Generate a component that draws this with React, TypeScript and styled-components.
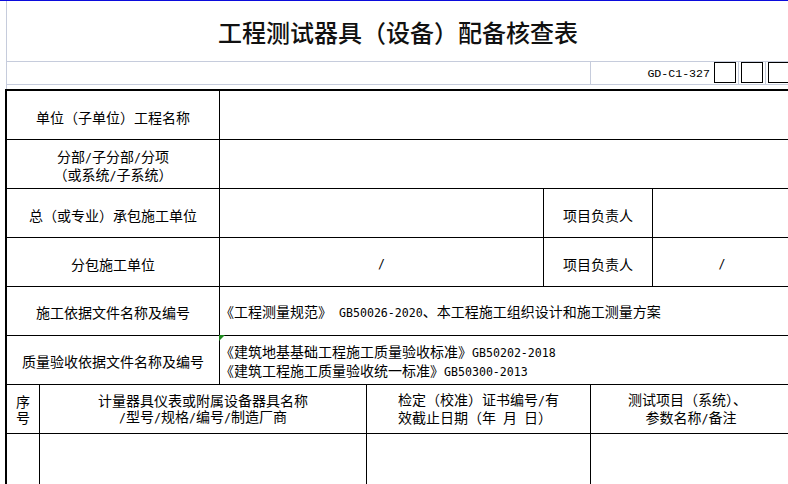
import React from 'react';
import styled, { createGlobalStyle } from 'styled-components';

const GRID = '#c6ccdc';
const CJK = '"Noto Sans CJK SC", "Noto Sans", sans-serif';

const GlobalStyle = createGlobalStyle`
  html, body { margin: 0; padding: 0; background: #ffffff; }
  body { font-family: ${CJK}; color: #000; overflow: hidden; }
`;

const Sheet = styled.div`
  width: 788px;
  height: 484px;
  overflow: hidden;
  box-sizing: border-box;
  border-top: 1px solid #0b0bdc;
  background: #fff;
`;

const Top = styled.div`
  margin-left: 6px;
  width: 782px;
  border-left: 1px solid ${GRID};
`;

const TitleRow = styled.div`
  height: 61px;
  box-sizing: border-box;
  border-bottom: 1px solid ${GRID};
  display: flex;
  align-items: center;
  justify-content: center;
  padding-top: 2px;
`;

const Title = styled.h1`
  margin: 0;
  font-family: ${CJK};
  font-size: 24px;
  font-weight: 500;
  line-height: 28px;
  color: #111;
  white-space: nowrap;
`;

const CodeRow = styled.div`
  display: flex;
  height: 23px;
  box-sizing: border-box;
  border-bottom: 1px solid ${GRID};
`;

const CodeBlank = styled.div`
  flex: 0 0 584px;
  box-sizing: border-box;
  border-right: 1px solid ${GRID};
`;

const CodeCell = styled.div<{ $w: number; $grow?: boolean }>`
  flex: ${(p) => (p.$grow ? '1 1 auto' : `0 0 ${p.$w}px`)};
  box-sizing: border-box;
  border-right: ${(p) => (p.$grow ? 'none' : `1px solid ${GRID}`)};
  display: flex;
  align-items: flex-start;
  justify-content: ${(p) => (p.$grow ? 'flex-start' : 'flex-end')};
  padding-left: ${(p) => (p.$grow ? 2 : 0)}px;
`;

const CodeText = styled.span`
  font-family: "Liberation Mono", monospace;
  font-size: 11.6px;
  line-height: 22px;
  padding-top: 1px;
  white-space: nowrap;
`;

const Box = styled.span<{ $after?: number }>`
  display: block;
  width: 22px;
  height: 21px;
  box-sizing: border-box;
  border: 1px solid #000;
  margin-left: 4px;
  margin-right: ${(p) => p.$after ?? 0}px;
  flex: 0 0 auto;
`;

const BoxOnly = styled(Box)`
  margin-left: 0;
`;

const Gap = styled.div`
  height: 4px;
`;

const Table = styled.div`
  margin-left: 5px;
  width: 785px;
  border-top: 2px solid #000;
  border-left: 2px solid #000;
`;

const Row = styled.div<{ $cols: string; $h?: number }>`
  display: grid;
  grid-template-columns: ${(p) => p.$cols};
  height: ${(p) => p.$h ?? 49}px;
  box-sizing: border-box;
  border-bottom: 1px solid #000;
`;

const Cell = styled.div<{ $left?: boolean; $shift?: number }>`
  position: relative;
  box-sizing: border-box;
  border-right: 1px solid #000;
  display: flex;
  flex-direction: column;
  justify-content: center;
  align-items: ${(p) => (p.$left ? 'flex-start' : 'center')};
  text-align: ${(p) => (p.$left ? 'left' : 'center')};
  padding-left: ${(p) => (p.$left ? 0 : 0)}px;
  padding-top: ${(p) => p.$shift ?? 0}px;
  font-size: 14px;
  line-height: 16.4px;
  white-space: nowrap;
  min-width: 0;
`;

const Line = styled.span`
  display: block;
  white-space: pre;
`;

const Lat = styled.span`
  font-family: "DejaVu Sans Mono", monospace;
  font-size: 11.6px;
  white-space: pre;
`;

const Flag = styled.span`
  position: absolute;
  left: -1px;
  top: -1px;
  width: 0;
  height: 0;
  border-top: 6px solid #1f8a1f;
  border-right: 6px solid transparent;
`;

const C2 = '213px 1fr';
const C4 = '213px 324px 109px 1fr';
const C7 = '33px 327px 224px 1fr';

export default function App() {
  return (
    <>
      <GlobalStyle />
      <Sheet>
        <Top>
          <TitleRow>
            <Title>工程测试器具（设备）配备核查表</Title>
          </TitleRow>
          <CodeRow>
            <CodeBlank />
            <CodeCell $w={148}>
              <CodeText>GD-C1-327</CodeText>
              <Box $after={2} />
            </CodeCell>
            <CodeCell $w={27}>
              <BoxOnly $after={2} />
            </CodeCell>
            <CodeCell $w={0} $grow>
              <BoxOnly />
            </CodeCell>
          </CodeRow>
          <Gap />
        </Top>
        <Table>
          <Row $cols={C2}>
            <Cell $shift={4}>单位（子单位）工程名称</Cell>
            <Cell />
          </Row>
          <Row $cols={C2}>
            <Cell $shift={4}>
              <Line>分部<Lat>/</Lat>子分部<Lat>/</Lat>分项</Line>
              <Line>（或系统<Lat>/</Lat>子系统）</Line>
            </Cell>
            <Cell />
          </Row>
          <Row $cols={C4}>
            <Cell $shift={4}>总（或专业）承包施工单位</Cell>
            <Cell />
            <Cell $shift={5}>项目负责人</Cell>
            <Cell />
          </Row>
          <Row $cols={C4}>
            <Cell $shift={4}>分包施工单位</Cell>
            <Cell $shift={4}><Lat>/</Lat></Cell>
            <Cell $shift={5}>项目负责人</Cell>
            <Cell $shift={4}><Lat>/</Lat></Cell>
          </Row>
          <Row $cols={C2}>
            <Cell $shift={3}>施工依据文件名称及编号</Cell>
            <Cell $left $shift={3}>
              <Line>
                《工程测量规范》<Lat> GB50026-2020</Lat>、本工程施工组织设计和施工测量方案
              </Line>
            </Cell>
          </Row>
          <Row $cols={C2}>
            <Cell $shift={3}>质量验收依据文件名称及编号</Cell>
            <Cell $left $shift={3}>
              <Flag />
              <Line>《建筑地基基础工程施工质量验收标准》<Lat>GB50202-2018</Lat></Line>
              <Line>《建筑工程施工质量验收统一标准》<Lat>GB50300-2013</Lat></Line>
            </Cell>
          </Row>
          <Row $cols={C7}>
            <Cell>
              <Line>序</Line>
              <Line>号</Line>
            </Cell>
            <Cell>
              <Line>计量器具仪表或附属设备器具名称</Line>
              <Line><Lat>/</Lat>型号<Lat>/</Lat>规格<Lat>/</Lat>编号<Lat>/</Lat>制造厂商</Line>
            </Cell>
            <Cell>
              <Line>检定（校准）证书编号<Lat>/</Lat>有</Line>
              <Line>效截止日期（年<Lat> </Lat>月<Lat> </Lat>日）<Lat> </Lat></Line>
            </Cell>
            <Cell>
              <Line>测试项目（系统）、<Lat> </Lat></Line>
              <Line>参数名称<Lat>/</Lat>备注</Line>
            </Cell>
          </Row>
          <Row $cols={C7} $h={70}>
            <Cell />
            <Cell />
            <Cell />
            <Cell />
          </Row>
        </Table>
      </Sheet>
    </>
  );
}
